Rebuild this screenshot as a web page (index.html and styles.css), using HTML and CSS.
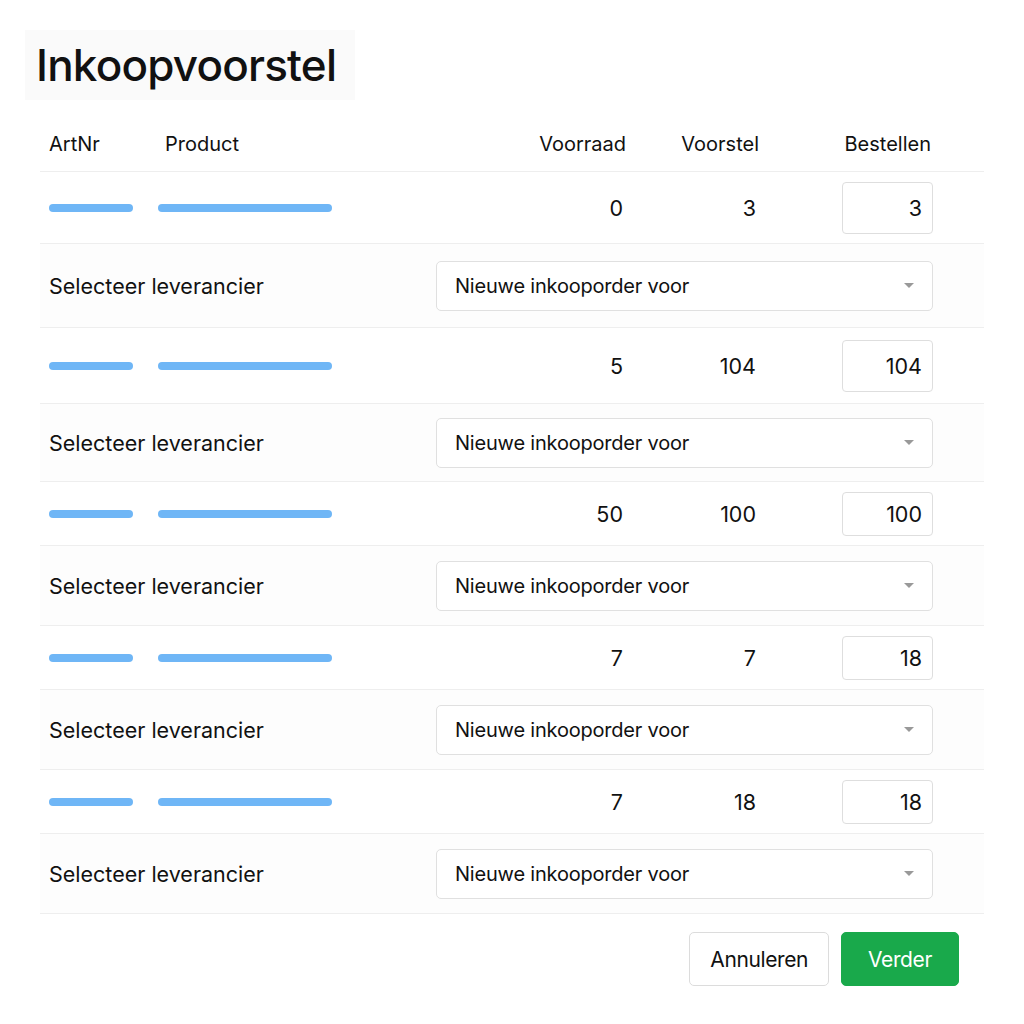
FILE: index.html
```html
<!DOCTYPE html>
<html lang="nl">
<head>
    <meta charset="UTF-8">
    <meta name="viewport" content="width=device-width, initial-scale=1.0">
    <title>Inkoopvoorstel</title>
    <link rel="stylesheet" href="styles.css">
</head>
<body>
    <header class="page-title">
        <h1>Inkoopvoorstel</h1>
    </header>
    <main class="proposal">
        <div class="row head">
            <div>ArtNr</div>
            <div>Product</div>
            <div class="num">Voorraad</div>
            <div class="num">Voorstel</div>
            <div class="num">Bestellen</div>
        </div>

        <div class="row item h72">
            <div><span class="bar bar-nr"></span></div>
            <div><span class="bar bar-name"></span></div>
            <div class="num">0</div>
            <div class="num">3</div>
            <div class="num"><input class="qty big" type="text" value="3"></div>
        </div>
        <div class="row supplier h84">
            <div>Selecteer leverancier</div>
            <div class="select"><span>Nieuwe inkooporder voor</span><i class="caret"></i></div>
        </div>

        <div class="row item h76">
            <div><span class="bar bar-nr"></span></div>
            <div><span class="bar bar-name"></span></div>
            <div class="num">5</div>
            <div class="num">104</div>
            <div class="num"><input class="qty big" type="text" value="104"></div>
        </div>
        <div class="row supplier h78">
            <div>Selecteer leverancier</div>
            <div class="select"><span>Nieuwe inkooporder voor</span><i class="caret"></i></div>
        </div>

        <div class="row item">
            <div><span class="bar bar-nr"></span></div>
            <div><span class="bar bar-name"></span></div>
            <div class="num">50</div>
            <div class="num">100</div>
            <div class="num"><input class="qty" type="text" value="100"></div>
        </div>
        <div class="row supplier">
            <div>Selecteer leverancier</div>
            <div class="select"><span>Nieuwe inkooporder voor</span><i class="caret"></i></div>
        </div>

        <div class="row item">
            <div><span class="bar bar-nr"></span></div>
            <div><span class="bar bar-name"></span></div>
            <div class="num">7</div>
            <div class="num">7</div>
            <div class="num"><input class="qty" type="text" value="18"></div>
        </div>
        <div class="row supplier">
            <div>Selecteer leverancier</div>
            <div class="select"><span>Nieuwe inkooporder voor</span><i class="caret"></i></div>
        </div>

        <div class="row item">
            <div><span class="bar bar-nr"></span></div>
            <div><span class="bar bar-name"></span></div>
            <div class="num">7</div>
            <div class="num">18</div>
            <div class="num"><input class="qty" type="text" value="18"></div>
        </div>
        <div class="row supplier">
            <div>Selecteer leverancier</div>
            <div class="select"><span>Nieuwe inkooporder voor</span><i class="caret"></i></div>
        </div>

        <div class="actions">
            <button class="btn">Annuleren</button>
            <button class="btn btn-primary">Verder</button>
        </div>
    </main>
</body>
</html>
```

FILE: styles.css
```css
body {
    font-family: Inter, "Liberation Sans", Arial, sans-serif;
    margin: 0;
    padding: 0;
    background-color: #fff;
    color: #111;
}
.page-title {
    margin: 30px 0 0 25px;
    width: 330px;
    height: 70px;
    background-color: #fafafa;
    display: flex;
    align-items: center;
}
.page-title h1 {
    margin: 0 0 0 11px;
    font-size: 44px;
    font-weight: 500;
    letter-spacing: -0.8px;
}
.proposal {
    margin: 16px 40px 0 40px;
}
.row {
    display: grid;
    align-items: center;
    padding: 0 51px 0 9px;
    border-bottom: 1px solid #eeeeee;
    font-size: 21.5px;
}
.head,
.item {
    grid-template-columns: 116px 1fr 120px 133px 174px;
}
.head {
    height: 55px;
    font-size: 20px;
}
.head .num:last-child {
    padding-right: 2px;
}
.item {
    height: 63px;
}
.item .num {
    padding-right: 3px;
}
.item .num:last-child {
    padding-right: 0;
}
.num {
    text-align: right;
}
.supplier {
    grid-template-columns: 1fr 497px;
    height: 79px;
    background-color: #fdfdfd;
}
.h72 { height: 71px; }
.h76 { height: 75px; }
.h78 { height: 77px; }
.h84 { height: 83px; }
.bar {
    display: block;
    height: 8px;
    border-radius: 4px;
    background-color: #6fb6f6;
}
.bar-nr {
    width: 84px;
}
.bar-name {
    width: 174px;
    margin-left: -7px;
}
.qty {
    width: 91px;
    height: 44px;
    box-sizing: border-box;
    border: 1px solid #dedede;
    border-radius: 4px;
    padding: 0 10px;
    font-family: inherit;
    font-size: 21.5px;
    color: #111;
    text-align: right;
    background: #fff;
}
.qty.big {
    height: 52px;
}
.select {
    height: 50px;
    box-sizing: border-box;
    border: 1px solid #e0e0e0;
    border-radius: 5px;
    background: #fff;
    display: flex;
    align-items: center;
    justify-content: space-between;
    padding: 0 18px 0 18px;
    font-size: 20px;
    letter-spacing: -0.2px;
}
.caret {
    width: 0;
    height: 0;
    border-left: 5px solid transparent;
    border-right: 5px solid transparent;
    border-top: 5px solid #999;
}
.actions {
    display: flex;
    justify-content: flex-end;
    gap: 12px;
    margin: 18px 25px 0 0;
}
.btn {
    height: 54px;
    padding: 0 20px;
    border: 1px solid #dcdcdc;
    border-radius: 5px;
    background-color: #fff;
    font-family: inherit;
    font-size: 21px;
    color: #111;
    letter-spacing: -0.4px;
    cursor: pointer;
}
.btn-primary {
    width: 118px;
    border-color: #19a94b;
    background-color: #19a94b;
    color: #fff;
}
```
